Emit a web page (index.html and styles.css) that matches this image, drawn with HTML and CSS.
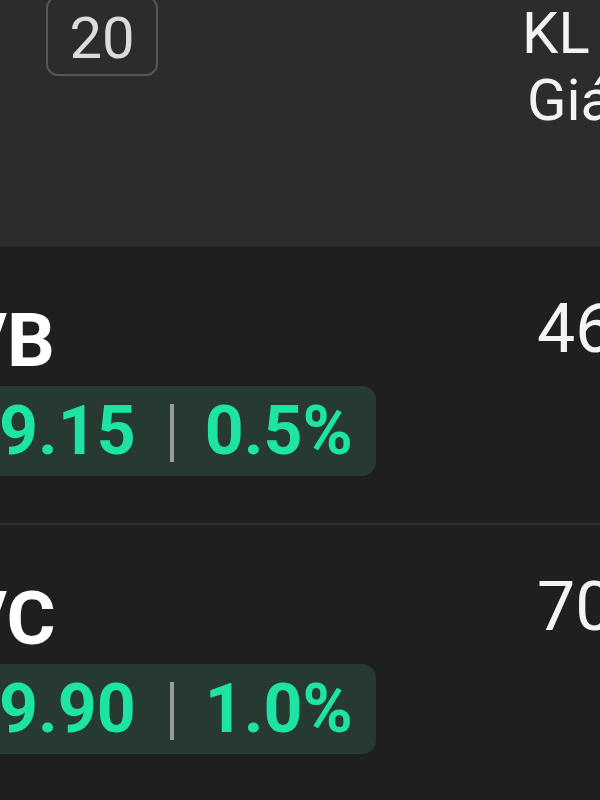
FILE: index.html
```html
<!DOCTYPE html>
<html lang="vi">
<head>
  <meta charset="UTF-8">
  <meta name="viewport" content="width=device-width, initial-scale=1.0">
  <title>Bảng giá</title>
  <link rel="stylesheet" href="styles.css">
</head>
<body>

  <div class="header">
    <div class="header-left">
      <div class="count">20</div>
    </div>
    <div class="header-right">
      <div>KL</div>
      <div class="sub">Giá</div>
    </div>
  </div>

  <div class="row">
    <div class="left">
      <div class="name">VB</div>
      <div class="pill">9.15<span class="sep"></span>0.5%</div>
    </div>
    <div class="right">46</div>
  </div>

  <div class="row">
    <div class="left">
      <div class="name">VC</div>
      <div class="pill">9.90<span class="sep"></span>1.0%</div>
    </div>
    <div class="right">70</div>
  </div>

</body>
</html>
```

FILE: styles.css
```css
html, body {
  margin: 0;
  padding: 0;
  height: 100%;
}

body {
  font-family: Roboto, "Liberation Sans", sans-serif;
  background-color: #1f1f1f;
  color: #fff;
  overflow: hidden;
  white-space: nowrap;
}

.header {
  display: flex;
  height: 246px;
  background-color: #2c2c2c;
  border-bottom: 1px solid #262626;
}

.header-left {
  width: 522px;
  flex-shrink: 0;
}

.count {
  width: 112px;
  height: 80px;
  margin-top: -4px;
  margin-left: 46px;
  border: 2px solid #565656;
  border-radius: 12px;
  box-sizing: border-box;
  display: flex;
  align-items: center;
  justify-content: center;
  padding-top: 4px;
  font-size: 58px;
  color: #dcdcdc;
}

.header-right {
  font-size: 58px;
  line-height: 67px;
  color: #f2f2f2;
}

.header-right .sub {
  padding-left: 5px;
}

.row {
  display: flex;
  height: 276px;
  border-bottom: 2px solid #333;
}

.left {
  width: 557px;
  flex-shrink: 0;
  margin-left: -20px;
  padding-top: 55px;
}

.name {
  margin-left: -22px;
  font-size: 75px;
  font-weight: bold;
  line-height: 76px;
}

.pill {
  display: inline-block;
  margin-top: 8px;
  height: 90px;
  line-height: 90px;
  padding: 0 23px 0 19px;
  border-radius: 14px;
  background-color: #263a32;
  color: #1ee4a3;
  font-size: 68px;
  font-weight: bold;
}

.sep {
  display: inline-block;
  width: 4px;
  height: 58px;
  margin: 0 31px 0 34px;
  vertical-align: -8px;
  background-color: #9a9a9a;
}

.right {
  padding-top: 48px;
  font-size: 68px;
  line-height: 68px;
  color: #f4f4f4;
}
```
